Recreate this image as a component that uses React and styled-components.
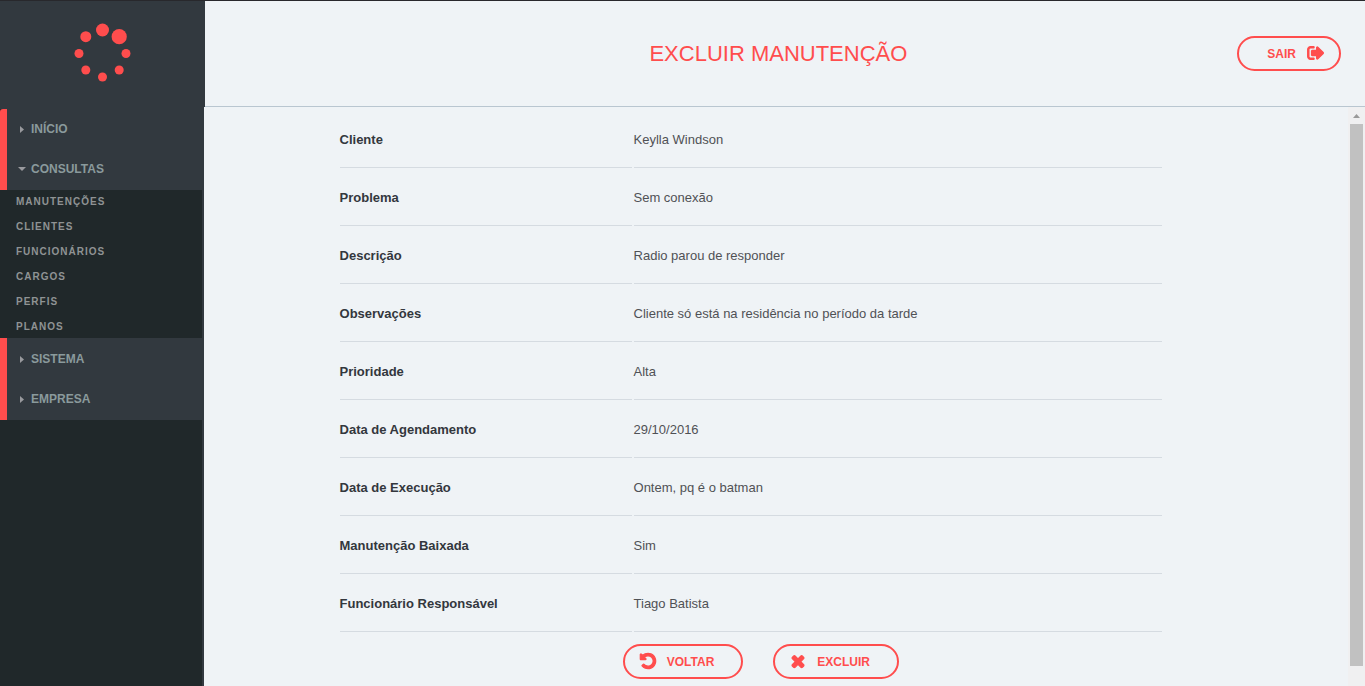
import React from "react";
import styled, { createGlobalStyle, ThemeProvider } from "styled-components";

const theme = {
  red: "#ff4d4d",
  slate: "#32393f",
  dark: "#20282a",
  page: "#eff3f6",
  menuText: "#8a9a9c",
};

const GlobalStyle = createGlobalStyle`
  *, *::before, *::after { box-sizing: border-box; }
  body {
    margin: 0;
    background: ${theme.page};
    font-family: "Liberation Sans", Arial, sans-serif;
    font-size: 13px;
    color: #4f5155;
  }
`;

const Page = styled.div`
  display: flex;
  flex-direction: column;
  min-height: 100vh;
  border-top: 1px solid #28282c;
`;

const TopRow = styled.div`
  display: flex;
  height: 106px;
`;

const Brand = styled.div`
  flex: none;
  width: 15%;
  display: flex;
  align-items: center;
  justify-content: center;
  padding-bottom: 2px;
  background: ${(p) => p.theme.slate};
`;

const Header = styled.header`
  flex: 1;
  display: grid;
  grid-template-columns: 1fr auto 1fr;
  align-items: center;
  padding: 0 24px 0 11px;
  border-bottom: 1px solid #b9c6d0;
`;

const Title = styled.h1`
  grid-column: 2;
  margin: 0;
  font-size: 22px;
  line-height: 26px;
  font-weight: 400;
  color: ${(p) => p.theme.red};
`;

const PillButton = styled.button`
  display: inline-flex;
  align-items: center;
  justify-self: end;
  gap: ${(p) => (p.$iconLast ? 11 : 10)}px;
  height: 35px;
  padding: ${(p) => (p.$iconLast ? "0 14px 0 28px" : "0 27px 0 14px")};
  border: 2px solid ${(p) => p.theme.red};
  border-radius: 18px;
  background: transparent;
  color: ${(p) => p.theme.red};
  font-family: inherit;
  font-size: 12px;
  font-weight: 700;
  cursor: pointer;
`;

const IconSvg = styled.svg`
  width: 18px;
  height: 18px;
  margin-bottom: 1px;
  overflow: visible;
  fill: currentColor;
  stroke: currentColor;
  stroke-width: 120;
`;

const Body = styled.div`
  flex: 1;
  display: flex;
`;

const Sidebar = styled.nav`
  flex: none;
  width: calc(15% - 1px);
  background: ${(p) => p.theme.dark};
  border-right: 2px solid ${(p) => p.theme.slate};
`;

const MenuTop = styled.div`
  height: 2px;
  background: ${(p) => p.theme.slate};
`;

const MenuGroup = styled.div`
  padding: ${(p) => (p.$first ? "0 0 1px" : "1px 0")};
  border-left: 7px solid ${(p) => p.theme.red};
  border-top-left-radius: ${(p) => (p.$first ? 3 : 0)}px;
  background: ${(p) => p.theme.slate};
`;

const MenuItem = styled.button`
  display: flex;
  align-items: center;
  gap: 4px;
  width: 100%;
  height: 40px;
  padding: 0 0 0 10px;
  border: 0;
  background: transparent;
  color: ${(p) => p.theme.menuText};
  font-family: inherit;
  font-size: 12px;
  font-weight: 700;
  text-align: left;
  cursor: pointer;
`;

const CaretSvg = styled.svg`
  width: 10px;
  height: 8px;
  fill: #999a9e;
`;

const SubMenu = styled.ul`
  display: flex;
  flex-direction: column;
  gap: 2px;
  margin: 0;
  padding: 0 0 0 16px;
  list-style: none;
`;

const SubLink = styled.a`
  display: block;
  font-size: 10px;
  line-height: 23px;
  font-weight: 700;
  letter-spacing: 1px;
  color: #8f9394;
  text-decoration: none;
`;

const Content = styled.main`
  flex: 1;
  padding: 3px 50px 0 0;
`;

const DetailTable = styled.table`
  width: calc(75% + 6px);
  margin: 0 auto;
  table-layout: fixed;
  border-collapse: separate;
  border-spacing: 2px 0;
`;

const Label = styled.th`
  width: 292px;
  height: 58px;
  padding: 2px 0 0;
  border-bottom: 1px solid #d5dbe1;
  text-align: left;
  font-weight: 700;
  color: #33373d;
`;

const Value = styled.td`
  padding: 2px 0 0;
  border-bottom: 1px solid #d5dbe1;
`;

const Actions = styled.div`
  display: flex;
  justify-content: center;
  gap: 30px;
  padding: 12px 0 7px 20px;
`;

const ScrollTrack = styled.div`
  flex: none;
  display: flex;
  flex-direction: column;
  align-items: center;
  width: 17px;
  padding: 1px 2px 20px;
  background: #f0f0f1;
`;

const ScrollArrow = styled.svg`
  width: 9px;
  height: 16px;
  fill: #9a9a9a;
`;

const ScrollThumb = styled.div`
  flex: 1;
  width: 13px;
  background: #c1c1c1;
`;

const paths = {
  exit: "M704 1440q0 4 1 20t.5 26.5-3 23.5-10 19.5-20.5 6.5h-320q-119 0-203.5-84.5t-84.5-203.5v-704q0-119 84.5-203.5t203.5-84.5h320q13 0 22.5 9.5t9.5 22.5q0 4 1 20t.5 26.5-3 23.5-10 19.5-20.5 6.5h-320q-66 0-113 47t-47 113v704q0 66 47 113t113 47h312l11.5 1 11.5 3 8 5.5 7 9 2 13.5zm928-544q0 26-19 45l-544 544q-19 19-45 19t-45-19-19-45v-288h-448q-26 0-45-19t-19-45v-384q0-26 19-45t45-19h448v-288q0-26 19-45t45-19 45 19l544 544q19 19 19 45z",
  undo: "M1664 896q0 156-61 298t-164 245-245 164-298 61q-172 0-327-72.5t-264-204.5q-7-10-6.5-22.5t8.5-20.5l137-138q10-9 25-9 16 2 23 12 73 95 179 147t225 52q104 0 198.5-40.5t163.5-109.5 109.5-163.5 40.5-198.5-40.5-198.5-109.5-163.5-163.5-109.5-198.5-40.5q-98 0-188 35.5t-160 101.5l137 138q31 30 14 69-17 40-59 40h-448q-26 0-45-19t-19-45v-448q0-42 40-59 39-17 69 14l130 129q107-101 244.5-156.5t284.5-55.5q156 0 298 61t245 164 164 245 61 298z",
  times: "M1490 1322q0 40-28 68l-136 136q-28 28-68 28t-68-28l-294-294-294 294q-28 28-68 28t-68-28l-136-136q-28-28-28-68t28-68l294-294-294-294q-28-28-28-68t28-68l136-136q28-28 68-28t68 28l294 294 294-294q28-28 68-28t68 28l136 136q28 28 28 68t-28 68l-294 294 294 294q28 28 28 68z",
};

const Icon = ({ name }) => (
  <IconSvg viewBox="0 0 1792 1792" aria-hidden="true">
    <path d={paths[name]} />
  </IconSvg>
);

const Caret = ({ open }) => (
  <CaretSvg viewBox="0 0 10 8" aria-hidden="true">
    <path d={open ? "M1 2h8L5 6z" : "M3 1v7l4-3.500z"} />
  </CaretSvg>
);

const Logo = () => (
  <svg width="58" height="60" viewBox="0 0 58 60" fill={theme.red} role="img" aria-label="Logo">
    <circle cx="29.500" cy="7" r="6.500" />
    <circle cx="46.200" cy="13.700" r="7.600" />
    <circle cx="53" cy="30.500" r="4.500" />
    <circle cx="46.200" cy="47" r="4.500" />
    <circle cx="29.500" cy="54" r="4.500" />
    <circle cx="12.800" cy="47" r="4.500" />
    <circle cx="6" cy="30.500" r="4.500" />
    <circle cx="12.800" cy="13.700" r="5.500" />
  </svg>
);

const queries = ["MANUTENÇÕES", "CLIENTES", "FUNCIONÁRIOS", "CARGOS", "PERFIS", "PLANOS"];

const details = [
  ["Cliente", "Keylla Windson"],
  ["Problema", "Sem conexão"],
  ["Descrição", "Radio parou de responder"],
  ["Observações", "Cliente só está na residência no período da tarde"],
  ["Prioridade", "Alta"],
  ["Data de Agendamento", "29/10/2016"],
  ["Data de Execução", "Ontem, pq é o batman"],
  ["Manutenção Baixada", "Sim"],
  ["Funcionário Responsável", "Tiago Batista"],
];

export default function App() {
  return (
    <ThemeProvider theme={theme}>
      <GlobalStyle />
      <Page>
        <TopRow>
          <Brand>
            <Logo />
          </Brand>
          <Header>
            <Title>EXCLUIR MANUTENÇÃO</Title>
            <PillButton type="button" $iconLast>
              SAIR
              <Icon name="exit" />
            </PillButton>
          </Header>
        </TopRow>
        <Body>
          <Sidebar>
            <MenuTop />
            <MenuGroup $first>
              <MenuItem type="button"><Caret />INÍCIO</MenuItem>
              <MenuItem type="button" aria-expanded="true"><Caret open />CONSULTAS</MenuItem>
            </MenuGroup>
            <SubMenu>
              {queries.map((name) => (
                <li key={name}><SubLink href="#">{name}</SubLink></li>
              ))}
            </SubMenu>
            <MenuGroup>
              <MenuItem type="button"><Caret />SISTEMA</MenuItem>
              <MenuItem type="button"><Caret />EMPRESA</MenuItem>
            </MenuGroup>
          </Sidebar>
          <Content>
            <DetailTable>
              <tbody>
                {details.map(([label, value]) => (
                  <tr key={label}>
                    <Label scope="row">{label}</Label>
                    <Value>{value}</Value>
                  </tr>
                ))}
              </tbody>
            </DetailTable>
            <Actions>
              <PillButton type="button"><Icon name="undo" />VOLTAR</PillButton>
              <PillButton type="button"><Icon name="times" />EXCLUIR</PillButton>
            </Actions>
          </Content>
          <ScrollTrack aria-hidden="true">
            <ScrollArrow viewBox="0 0 9 16"><path d="M1 10h7L4.500 6z" /></ScrollArrow>
            <ScrollThumb />
          </ScrollTrack>
        </Body>
      </Page>
    </ThemeProvider>
  );
}
